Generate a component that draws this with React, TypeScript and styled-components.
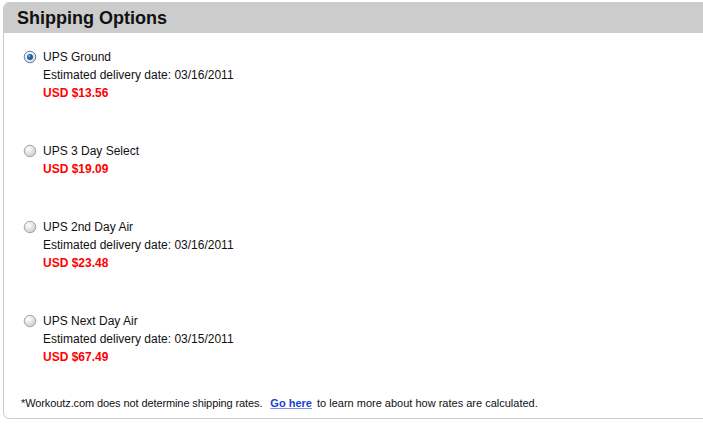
import React from "react";
import styled, { createGlobalStyle } from "styled-components";

const GlobalStyle = createGlobalStyle`
  html, body {
    margin: 0;
    padding: 0;
    background: #ffffff;
    overflow: hidden;
  }
`;

const Panel = styled.div`
  margin: 2px 0 0 3px;
  width: 720px;
  height: 417px;
  box-sizing: border-box;
  border: 1px solid #cccccc;
  border-radius: 6px;
  overflow: hidden;
  font-family: "Liberation Sans", Arial, sans-serif;
  display: flex;
  flex-direction: column;
`;

const Header = styled.div`
  height: 30px;
  background: #cccccc;
  display: flex;
  align-items: center;
  padding-left: 13px;
`;

const Title = styled.h2`
  margin: 0;
  font-size: 18px;
  font-weight: bold;
  color: #111111;
  line-height: 1;
`;

const Options = styled.div`
  display: flex;
  flex-direction: column;
  gap: 40px;
  padding: 15px 0 0 19px;
`;

const Option = styled.label`
  display: flex;
  align-items: flex-start;
  gap: 6px;
`;

const Lines = styled.div`
  display: flex;
  flex-direction: column;
  font-size: 12px;
  line-height: 18px;
  color: #111111;
`;

const Price = styled.span`
  color: #ff0000;
  font-weight: bold;
`;

const RadioIcon = styled.svg`
  flex: none;
  margin-top: 2px;
`;

const Note = styled.div`
  margin-top: auto;
  padding: 0 0 9px 17px;
  font-size: 11px;
  color: #111111;
`;

const Lead = styled.span`
  letter-spacing: -0.1px;
`;

const Link = styled.a`
  color: #1a3fcf;
  font-weight: bold;
  text-decoration: underline;
  text-decoration-color: #7d8ff0;
  margin: 0 2px 0 5px;
`;

const Radio = ({ checked }: { checked: boolean }) => (
  <RadioIcon width="14" height="14" viewBox="0 0 14 14">
    <defs>
      <radialGradient id={checked ? "rg-on" : "rg-off"} cx="0.4" cy="0.35" r="0.7">
        <stop offset="0" stopColor="#ffffff" />
        <stop offset="1" stopColor={checked ? "#c9d7e4" : "#c8c8c8"} />
      </radialGradient>
    </defs>
    <circle cx="7" cy="7" r="5.8" fill={`url(#${checked ? "rg-on" : "rg-off"})`} stroke={checked ? "#6d7f92" : "#a8a8a8"} strokeWidth="1" />
    {checked && <circle cx="7" cy="7" r="3" fill="#1f5fa0" />}
    {checked && <circle cx="6.3" cy="6.2" r="1.1" fill="#7fb3e6" />}
  </RadioIcon>
);

const options = [
  { name: "UPS Ground", date: "03/16/2011", price: "USD $13.56", checked: true },
  { name: "UPS 3 Day Select", date: "", price: "USD $19.09", checked: false },
  { name: "UPS 2nd Day Air", date: "03/16/2011", price: "USD $23.48", checked: false },
  { name: "UPS Next Day Air", date: "03/15/2011", price: "USD $67.49", checked: false },
];

export default function App() {
  return (
    <>
      <GlobalStyle />
      <Panel>
        <Header>
          <Title>Shipping Options</Title>
        </Header>
        <Options>
          {options.map((o) => (
            <Option key={o.name}>
              <Radio checked={o.checked} />
              <Lines>
                <span>{o.name}</span>
                {o.date && <span>Estimated delivery date: {o.date}</span>}
                <Price>{o.price}</Price>
              </Lines>
            </Option>
          ))}
        </Options>
        <Note>
          <Lead>*Workoutz.com does not determine shipping rates. </Lead>
          <Link href="#">Go here</Link> to learn more about how rates are calculated.
        </Note>
      </Panel>
    </>
  );
}
